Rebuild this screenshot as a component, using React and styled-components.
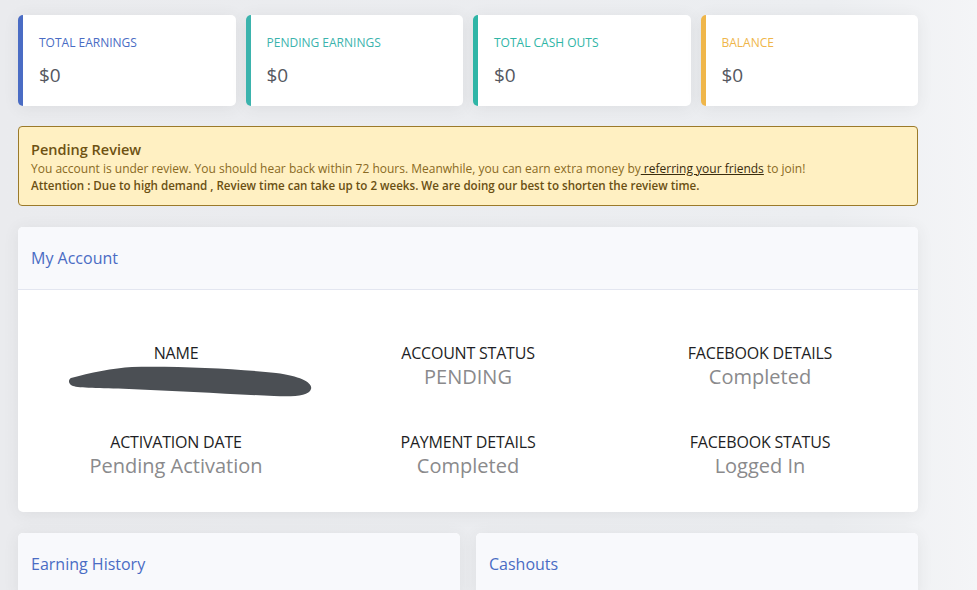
import React from 'react';
import styled, { createGlobalStyle } from 'styled-components';

const Global = createGlobalStyle`
  html, body {
    margin: 0;
    padding: 0;
  }
  body {
    font-family: "Open Sans", "Liberation Sans", sans-serif;
    background: linear-gradient(90deg, #eaebee 0%, #eceef1 85%, #f4f5f7 100%);
    color: #5a5c69;
    width: 977px;
    height: 590px;
    overflow: hidden;
  }
`;

const stats = [
  { label: 'Total Earnings', value: '$0', color: '#4a6cc4' },
  { label: 'Pending Earnings', value: '$0', color: '#3bb3ad' },
  { label: 'Total Cash Outs', value: '$0', color: '#2fb5a6' },
  { label: 'Balance', value: '$0', color: '#efb64a' },
];

const details = [
  { label: 'Name', value: null },
  { label: 'Account Status', value: 'PENDING' },
  { label: 'Facebook Details', value: 'Completed' },
  { label: 'Activation Date', value: 'Pending Activation' },
  { label: 'Payment Details', value: 'Completed' },
  { label: 'Facebook Status', value: 'Logged In' },
];

// hand-drawn marker stroke hiding the user's name
function Redacted() {
  return (
    <Scribble width="244" height="33" viewBox="0 0 244 33">
      <path
        d="M2 13 C 20 8, 45 3, 63 2 C 110 1, 170 4, 207 8 C 232 11, 244 18, 242 24 C 240 31, 225 32, 205 31 C 160 29, 110 26, 60 24 C 30 23, 10 23, 4 21 C -1 19, -1 15, 2 13 Z"
        fill="#4b4f54"
      />
    </Scribble>
  );
}

export default function App() {
  return (
    <>
      <Global />
      <Page>
        <StatRow>
          {stats.map((s) => (
            <StatCard key={s.label} accent={s.color}>
              <StatLabel accent={s.color}>{s.label}</StatLabel>
              <StatValue>{s.value}</StatValue>
            </StatCard>
          ))}
        </StatRow>

        <Alert>
          <AlertTitle>Pending Review</AlertTitle>
          <AlertLine>
            You account is under review. You should hear back within 72 hours. Meanwhile, you can earn
            extra money by<AlertLink href="#"> referring your friends</AlertLink> to join!
          </AlertLine>
          <AlertLine bold>
            Attention : Due to high demand , Review time can take up to 2 weeks. We are doing our best to
            shorten the review time.
          </AlertLine>
        </Alert>

        <Panel>
          <PanelHeader>My Account</PanelHeader>
          <DetailGrid>
            {details.map((d) => (
              <Detail key={d.label}>
                <DetailLabel>{d.label}</DetailLabel>
                {d.value ? <DetailValue>{d.value}</DetailValue> : <Redacted />}
              </Detail>
            ))}
          </DetailGrid>
        </Panel>

        <SplitRow>
          <Panel>
            <PanelHeader>Earning History</PanelHeader>
          </Panel>
          <Panel>
            <PanelHeader>Cashouts</PanelHeader>
          </Panel>
        </SplitRow>
      </Page>
    </>
  );
}

const Page = styled.div`
  width: 900px;
  padding: 15px 0 0 18px;
  display: flex;
  flex-direction: column;
  gap: 21px;
`;

const StatRow = styled.div`
  display: grid;
  grid-template-columns: repeat(4, 1fr);
  gap: 10px;
  margin-bottom: -1px;
`;

const StatCard = styled.div`
  height: 91px;
  box-sizing: border-box;
  background: #fff;
  border-left: 5px solid ${(p) => p.accent};
  border-radius: 5px;
  box-shadow: 0 2px 16px rgba(58, 59, 69, 0.08);
  padding: 20px 16px 0;
`;

const StatLabel = styled.div`
  color: ${(p) => p.accent};
  font-size: 12px;
  line-height: 16px;
  font-weight: 500;
  text-transform: uppercase;
`;

const StatValue = styled.div`
  margin-top: 11px;
  font-size: 19px;
  line-height: 26px;
  color: #55575f;
`;

const Alert = styled.div`
  background: #fff0c2;
  border: 1px solid #9b7a2a;
  border-radius: 4px;
  padding: 13px 12px 11px;
  color: #7d5f18;
`;

const AlertTitle = styled.div`
  font-size: 14.5px;
  line-height: 20px;
  font-weight: 600;
  color: #6e5212;
`;

const AlertLine = styled.div`
  font-size: ${(p) => (p.bold ? '11.6px' : '12px')};
  line-height: 17px;
  font-weight: ${(p) => (p.bold ? 600 : 400)};
  color: ${(p) => (p.bold ? '#6a4f12' : '#8a6a22')};
`;

const AlertLink = styled.a`
  color: #3a2c0c;
  text-decoration: underline;
`;

const Panel = styled.div`
  background: #fff;
  border-radius: 5px;
  box-shadow: 0 2px 16px rgba(58, 59, 69, 0.08);
  overflow: hidden;
`;

const PanelHeader = styled.div`
  height: 63px;
  box-sizing: border-box;
  display: flex;
  align-items: center;
  padding: 0 13px 1px;
  background: #f8f9fc;
  border-bottom: 1px solid #e3e6f0;
  color: #4a6cc4;
  font-size: 16px;
`;

const DetailGrid = styled.div`
  display: grid;
  grid-template-columns: repeat(3, 1fr);
  row-gap: 41px;
  padding: 53px 12px 32px;
`;

const Detail = styled.div`
  display: flex;
  flex-direction: column;
  align-items: center;
  text-align: center;
`;

const DetailLabel = styled.div`
  font-size: 16px;
  line-height: 20px;
  font-weight: 500;
  letter-spacing: -0.2px;
  color: #1e1e24;
  text-transform: uppercase;
`;

const DetailValue = styled.div`
  font-size: 20px;
  line-height: 28px;
  color: #8a8a8c;
`;

const Scribble = styled.svg`
  display: block;
  margin: 2px 0 -7px 30px;
`;

const SplitRow = styled.div`
  display: grid;
  grid-template-columns: 1fr 1fr;
  gap: 16px;
`;
